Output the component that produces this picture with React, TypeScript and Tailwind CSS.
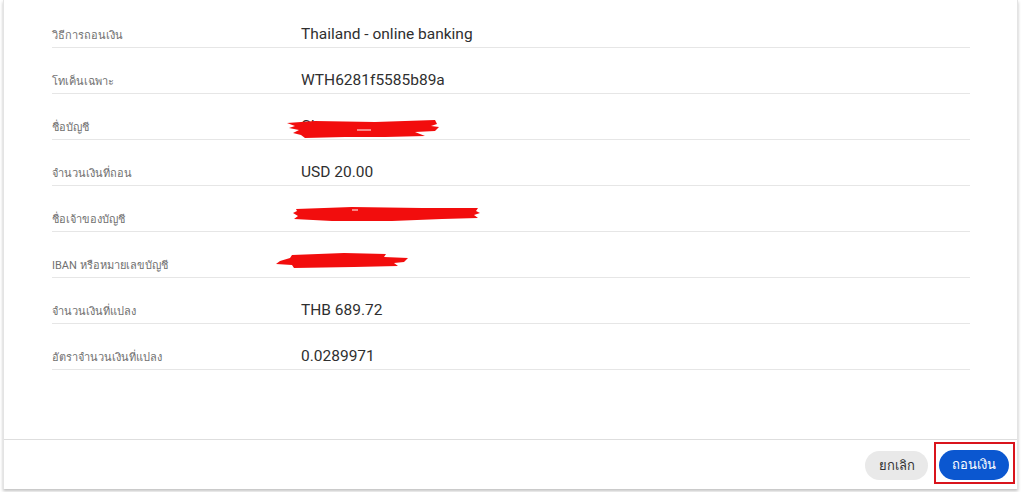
import type { ReactNode } from "react";

const rows: { label: string; value?: string; redact?: ReactNode }[] = [
  { label: "วิธีการถอนเงิน", value: "Thailand - online banking" },
  { label: "โทเค็นเฉพาะ", value: "WTH6281f5585b89a" },
  {
    label: "ชื่อบัญชี",
    value: "Ch",
    redact: (
      <svg
        className="absolute left-[-16px] top-[5px]"
        width="160"
        height="22"
        viewBox="0 0 160 22"
        fill="#f20d0d"
      >
        <path d="M2 4 L30 2 L90 3 L150 1 L152 5 L146 7 L154 8 L150 12 L130 13 L140 17 L100 18 L60 18 L20 19 L16 16 L8 14 L14 11 L4 9 L10 7 Z" />
        <path d="M72 11 L86 11" stroke="#fff" strokeWidth="1" />
      </svg>
    ),
  },
  { label: "จำนวนเงินที่ถอน", value: "USD 20.00" },
  {
    label: "ชื่อเจ้าของบัญชี",
    redact: (
      <svg
        className="absolute left-[-9px] top-[0px]"
        width="190"
        height="18"
        viewBox="0 0 190 18"
        fill="#f20d0d"
      >
        <path d="M4 3 L60 1 L130 2 L186 2 L184 5 L188 7 L182 9 L186 12 L150 13 L100 15 L40 15 L2 13 L6 10 L1 7 L5 5 Z" />
        <path d="M60 4 L66 4" stroke="#fff" strokeWidth="1" />
      </svg>
    ),
  },
  {
    label: "IBAN หรือหมายเลขบัญชี",
    redact: (
      <svg
        className="absolute left-[-27px] top-[0px]"
        width="138"
        height="20"
        viewBox="0 0 138 20"
        fill="#f20d0d"
      >
        <path d="M18 3 L70 1 L112 2 L110 5 L134 6 L130 10 L120 11 L124 14 L80 15 L20 16 L18 13 L2 12 L6 9 L16 6 Z" />
      </svg>
    ),
  },
  { label: "จำนวนเงินที่แปลง", value: "THB 689.72" },
  { label: "อัตราจำนวนเงินที่แปลง", value: "0.0289971" },
];

function DetailRow({
  label,
  value,
  redact,
}: {
  label: string;
  value?: string;
  redact?: ReactNode;
}) {
  return (
    <div className="flex h-[46px] items-end border-b border-[#e6e6e6] pb-[1px]">
      <div className="w-[249px] text-[11px] leading-5 text-[#707070]">{label}</div>
      <div className="relative h-6 flex-1 text-[15.5px] leading-6 text-[#2f2f2f]">
        {value}
        {redact}
      </div>
    </div>
  );
}

export default function App() {
  return (
    <div
      className="h-[492px] w-full overflow-hidden bg-white"
      style={{ fontFamily: "Roboto, 'Noto Sans', 'Liberation Sans', sans-serif" }}
    >
      <div className="ml-[3px] flex h-[489px] w-[1015px] flex-col border-x border-[#e4e4e4] bg-white shadow-[0_2px_3px_rgba(0,0,0,0.25)]">
        <div className="flex-1 pl-[48px] pr-[47px] pt-[2px]">
          {rows.map((r) => (
            <DetailRow key={r.label} {...r} />
          ))}
        </div>
        <div className="flex h-[50px] items-start justify-end gap-[6px] border-t border-[#dedede] pr-[2px] pt-[2px]">
          <button className="mt-[9px] h-[29px] w-[63px] rounded-full bg-[#e9e9e9] text-[13px] text-[#333]">
            ยกเลิก
          </button>
          <div className="border-2 border-[#d9141c] pb-[2px] pl-[3px] pr-[4px] pt-[6px]">
            <button className="h-[30px] w-[70px] rounded-full bg-[#0b57d0] text-[13px] text-white">
              ถอนเงิน
            </button>
          </div>
        </div>
      </div>
    </div>
  );
}
